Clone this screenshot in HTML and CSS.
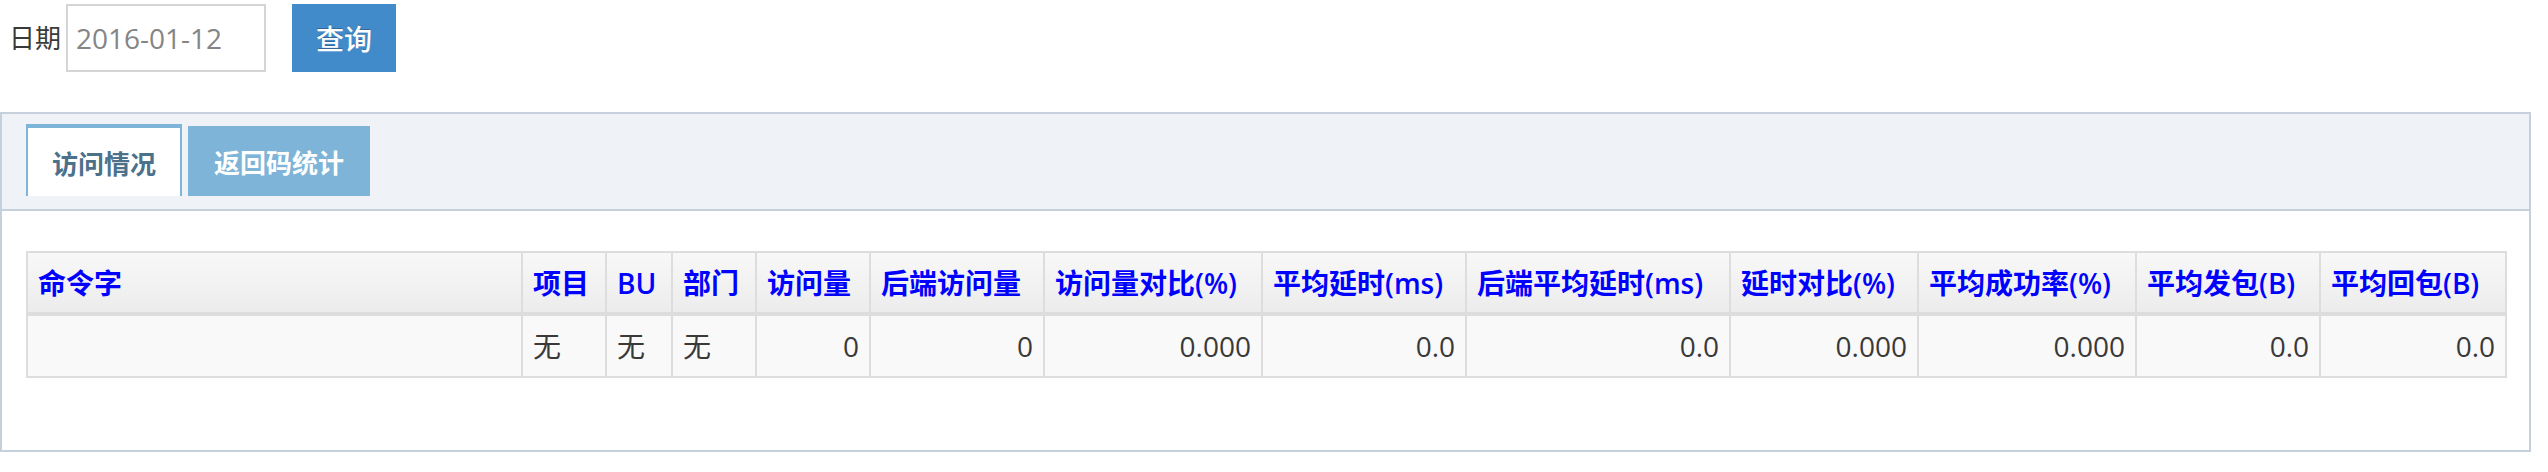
FILE: index.html
```html
<!DOCTYPE html>
<html lang="zh-CN">
<head>
<meta charset="utf-8">
<title>访问情况</title>
<link rel="stylesheet" href="styles.css">
</head>
<body>
<div class="toolbar">
  <label class="label">日期</label>
  <input class="date-input" type="text" value="2016-01-12">
  <button class="btn-query" type="button">查询</button>
</div>
<div class="widget">
  <div class="widget-header">
    <ul class="tabs">
      <li class="tab active">访问情况</li>
      <li class="tab">返回码统计</li>
    </ul>
  </div>
  <div class="widget-body">
    <table class="grid">
      <colgroup>
        <col class="c1"><col class="c2"><col class="c3"><col class="c4"><col class="c5"><col class="c6"><col class="c7"><col class="c8"><col class="c9"><col class="c10"><col class="c11"><col class="c12"><col class="c13">
      </colgroup>
      <thead>
        <tr>
          <th>命令字</th><th>项目</th><th><span class="lat">BU</span></th><th>部门</th><th>访问量</th><th>后端访问量</th><th>访问量对比<span class="lat">(%)</span></th><th>平均延时<span class="lat">(ms)</span></th><th>后端平均延时<span class="lat">(ms)</span></th><th>延时对比<span class="lat">(%)</span></th><th>平均成功率<span class="lat">(%)</span></th><th>平均发包<span class="lat">(B)</span></th><th>平均回包<span class="lat">(B)</span></th>
        </tr>
      </thead>
      <tbody>
        <tr>
          <td></td><td>无</td><td>无</td><td>无</td><td class="num">0</td><td class="num">0</td><td class="num">0.000</td><td class="num">0.0</td><td class="num">0.0</td><td class="num">0.000</td><td class="num">0.000</td><td class="num">0.0</td><td class="num">0.0</td>
        </tr>
      </tbody>
    </table>
  </div>
</div>
</body>
</html>
```
FILE: styles.css
```css
html, body {
  margin: 0;
  padding: 0;
  background: #fff;
}
body {
  font-family: "Open Sans", "Noto Sans CJK SC", sans-serif;
  font-size: 28px;
  color: #393939;
}
.toolbar {
  display: flex;
  align-items: center;
  height: 68px;
  padding-top: 4px;
  padding-left: 9px;
}
.label {
  font-size: 26px;
  color: #393939;
  line-height: 40px;
  margin-right: 5px;
}
.date-input {
  box-sizing: border-box;
  width: 200px;
  height: 68px;
  border: 2px solid #d5d5d5;
  padding: 0 8px;
  margin: 0;
  font-family: "Open Sans", "Noto Sans CJK SC", sans-serif;
  font-size: 28px;
  color: #858585;
  background: #fff;
  outline: none;
}
.btn-query {
  box-sizing: border-box;
  width: 104px;
  height: 68px;
  margin: 0 0 0 26px;
  padding: 0;
  border: 0;
  background: #428bca;
  color: #fff;
  font-family: "Open Sans", "Noto Sans CJK SC", sans-serif;
  font-size: 28px;
  font-weight: 500;
  text-shadow: 0 -1px 0 rgba(0,0,0,0.25);
}
.widget {
  box-sizing: border-box;
  width: 2531px;
  margin-top: 40px;
  border: 2px solid #c5d0dc;
}
.widget-header {
  height: 95px;
  background: #eff3f8;
  border-bottom: 2px solid #c5d0dc;
  padding-left: 24px;
  box-sizing: content-box;
}
.tabs {
  display: flex;
  align-items: flex-start;
  margin: 0;
  padding: 10px 0 0 0;
  list-style: none;
}
.tab {
  box-sizing: border-box;
  display: flex;
  align-items: center;
  justify-content: center;
  font-size: 26px;
  font-weight: bold;
  white-space: nowrap;
}
.tab.active {
  width: 156px;
  height: 72px;
  background: #fff;
  color: #4c718a;
  border: 2px solid #7db4d8;
  border-top-width: 4px;
  border-bottom: 0;
  padding-top: 2px;
}
.tab:not(.active) {
  width: 182px;
  height: 70px;
  margin-top: 2px;
  margin-left: 6px;
  background: #7db4d8;
  color: #fff;
  padding-top: 2px;
}
.widget-body {
  padding: 40px 0 72px 24px;
  background: #fff;
}
.grid {
  border-collapse: collapse;
  table-layout: fixed;
  width: 2481px;
  border: 2px solid #ddd;
}
.c1 { width: 495px; }
.c2 { width: 84px; }
.c3 { width: 66px; }
.c4 { width: 84px; }
.c5 { width: 114px; }
.c6 { width: 174px; }
.c7 { width: 218px; }
.c8 { width: 204px; }
.c9 { width: 264px; }
.c10 { width: 188px; }
.c11 { width: 218px; }
.c12 { width: 184px; }
.c13 { width: 186px; }
.grid th,
.grid td {
  border: 2px solid #ddd;
  padding: 10px;
  line-height: 40px;
  font-size: 28px;
  white-space: nowrap;
  overflow: hidden;
}
.grid th {
  text-align: left;
  font-weight: bold;
  color: #0000ff;
  background: linear-gradient(to bottom, #f8f8f8 0%, #ececec 100%);
  border-bottom-width: 4px;
  padding-bottom: 9px;
}
.grid th .lat {
  font-weight: 600;
}
.grid td {
  background: #f9f9f9;
  color: #393939;
  text-align: left;
}
.grid td.num {
  text-align: right;
}
```
